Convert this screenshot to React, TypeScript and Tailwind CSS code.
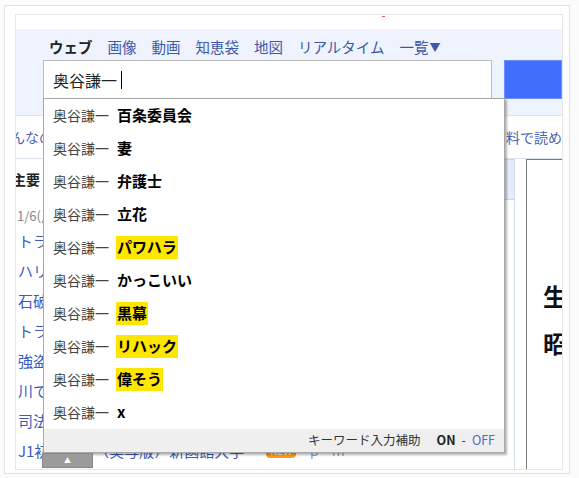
const SUGGESTIONS: { text: string; mark?: boolean }[] = [
  { text: '百条委員会' },
  { text: '妻' },
  { text: '弁護士' },
  { text: '立花' },
  { text: 'パワハラ', mark: true },
  { text: 'かっこいい' },
  { text: '黒幕', mark: true },
  { text: 'リハック', mark: true },
  { text: '偉そう', mark: true },
  { text: 'x' },
]

const TABS = ['画像', '動画', '知恵袋', '地図', 'リアルタイム']

const NEWS = [
  'トランプ氏 関税を発表',
  'ハリス氏が声明を発表',
  '石破首相 国会で答弁',
  'トラック横転で渋滞',
  '強盗事件で男を逮捕',
  '川で男性が溺れ死亡',
  '司法試験の合格者発表',
]

function Suggestion({ text, mark }: { text: string; mark?: boolean }) {
  return (
    <div className="h-[33px] flex-none flex items-center pl-[9px] whitespace-nowrap">
      <span className="text-[14px] text-[#444]">奥谷謙一</span>
      <span
        className={`text-[15px] font-bold text-black ${mark ? 'ml-[7px] bg-[#ffe600] px-[1px]' : 'ml-[8px]'}`}
      >
        {text}
      </span>
    </div>
  )
}

export default function App() {
  return (
    <div className="w-[579px] h-[478px] bg-[#fbfbfb] pt-[5px] pl-[4px] font-['Noto_Sans_CJK_JP','Noto_Sans',sans-serif]">
      <div className="w-[566px] h-[469px] border border-[#e2e2e2] bg-white pl-[10px] pt-[8px]">
        <div className="relative w-[548px] h-[456px] border border-[#e6e6e6] overflow-hidden">
          {/* top strip */}
          <div className="h-[14px] pl-[366px] pt-[1px]">
            <div className="w-[3px] h-[1px] bg-[#f05050]" />
          </div>

          {/* header with tabs and search box */}
          <div className="h-[87px] bg-[#eef3fd] border-b border-[#dde4f3] pt-[8px]">
            <div className="h-[20px] flex items-center gap-[15px] pl-[33px] text-[14.5px] leading-none whitespace-nowrap">
              <span className="font-bold text-[#222]">ウェブ</span>
              {TABS.map(t => (
                <span key={t} className="text-[#3d58a8]">{t}</span>
              ))}
              <span className="text-[#3d58a8] flex items-center">
                一覧<span className="text-[11px] ml-[1px]">▼</span>
              </span>
            </div>
            <div className="mt-[3px] flex pl-[27px]">
              <div className="w-[461px] h-[39px] bg-white border border-[#bdbdbd] flex items-center pl-[9px]">
                <span className="text-[16px] text-[#222]">奥谷謙一</span>
                <span className="ml-[4px] w-[1px] h-[18px] bg-black" />
              </div>
              <div className="ml-[12px] w-[60px] h-[39px] bg-[#426efc] border border-[#6d8ffd]" />
            </div>
          </div>

          {/* strip under header */}
          <div className="h-[43px] border-b border-[#dbe2f0] flex items-center justify-between text-[14px] text-[#4a62b0] whitespace-nowrap">
            <span className="-ml-[19px]">みんなの</span>
            <span className="-mr-[14px]">料で読める</span>
          </div>

          {/* body */}
          <div className="flex h-[310px]">
            <div className="w-[499px] flex-none border-r border-[#cfdcf5] flex flex-col">
              <div className="h-[41px] flex-none flex">
                <div className="w-[60px] flex items-center text-[14px] font-bold text-[#222] whitespace-nowrap">
                  <span className="-ml-[4px]">主要</span>
                </div>
                <div className="flex-1" />
                <div className="w-[10px] bg-[#e4ebfc] border-y border-[#c9d7f3]" />
              </div>
              <div className="h-[26px] flex-none pt-[6px] flex items-center pl-[1px] text-[13px] text-[#888]">
                1/6(月) 12:00更新
              </div>
              {NEWS.map(n => (
                <div key={n} className="h-[30px] flex-none flex items-center pl-[2px] text-[15px] text-[#3d5bbf] whitespace-nowrap">
                  {n}
                </div>
              ))}
              <div className="h-[30px] flex-none flex items-center pl-[2px] text-[15px] text-[#3d5bbf] whitespace-nowrap">
                <span>J1初昇格の（実写版）新函館大学</span>
                <span className="ml-[22px] px-[4px] h-[14px] rounded-[4px] bg-[#ff9c1a] text-white text-[10px] leading-[14px]">NEW</span>
                <span className="ml-[12px] text-[12px] text-[#7f92c9]">ｐ・ｍ</span>
              </div>
            </div>
            <div className="ml-[11px] flex-1 border-l border-t border-[#7a7a7a] pl-[16px] pt-[115px] text-[24px] leading-[47px] font-bold text-[#111] whitespace-nowrap font-['Liberation_Serif','Noto_Sans_CJK_JP',serif]">
              <div>生</div>
              <div>昭</div>
            </div>
          </div>

          {/* suggestion dropdown */}
          <div className="absolute left-[27px] top-[83px] w-[462px] h-[355px] bg-white border border-[#a9a9a9] shadow-[2px_2px_2px_rgba(0,0,0,0.3)] flex flex-col">
            {SUGGESTIONS.map(s => (
              <Suggestion key={s.text} text={s.text} mark={s.mark} />
            ))}
            <div className="mt-auto h-[23px] bg-[#efefef] flex items-center justify-end pr-[9px] text-[12.5px] text-[#333] whitespace-nowrap">
              <span>キーワード入力補助</span>
              <span className="ml-[16px] font-bold text-[#222]">ON</span>
              <span className="mx-[6px]">-</span>
              <span className="text-[#4e6bc9]">OFF</span>
            </div>
            <div className="absolute -left-[2px] top-full mt-[1px] w-[51px] h-[15px] bg-[#9b9b9b] border border-[#888] flex items-center justify-center">
              <span className="text-white text-[7px] leading-none">▲</span>
            </div>
          </div>
        </div>
      </div>
    </div>
  )
}
